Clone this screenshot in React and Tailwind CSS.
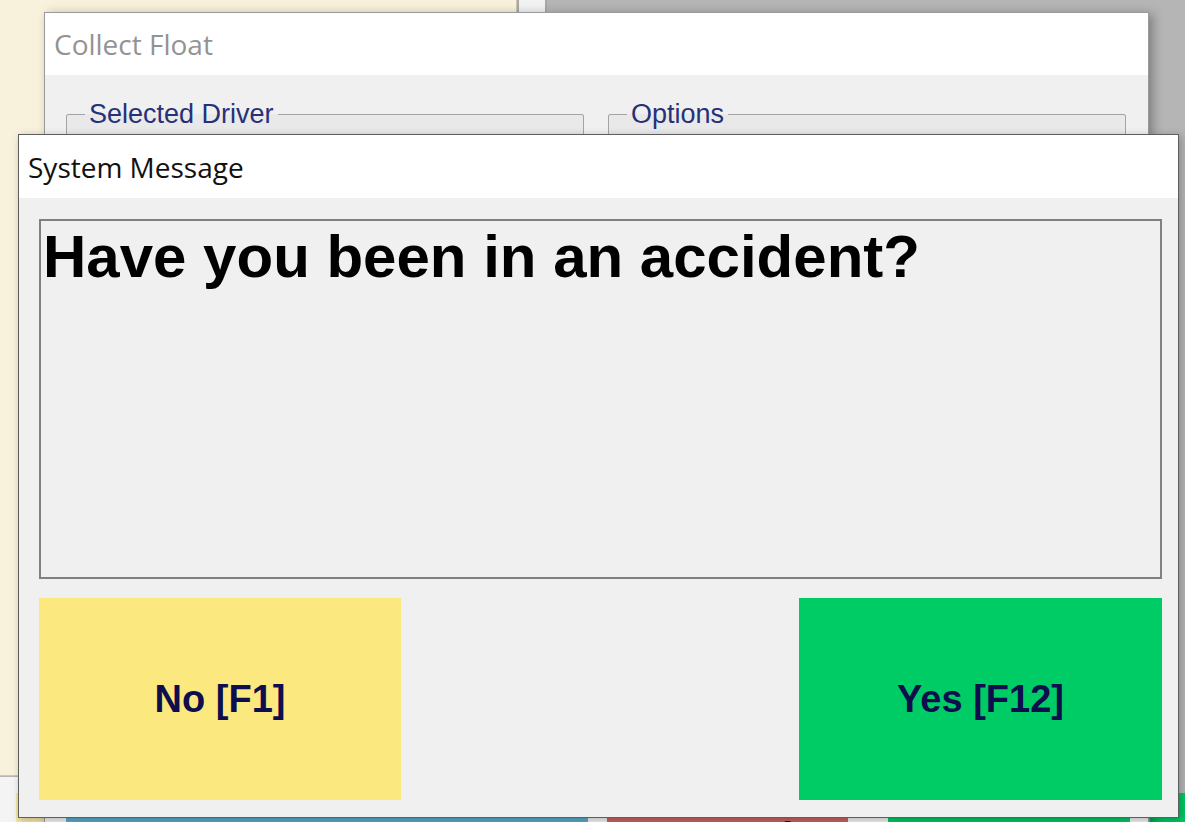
import React from "react";

const arial = { fontFamily: '"Liberation Sans", Arial, sans-serif' };
const ui = { fontFamily: '"Open Sans", "Noto Sans", sans-serif' };

function GroupBox({ label, className }) {
    return (
        <fieldset className={`border border-[#a4a4a4] rounded-[2px] bg-[#e9e9e9] ${className}`}>
            <legend className="ml-[18px] px-[4px] text-[27px] leading-none text-[#28307a]" style={arial}>
                {label}
            </legend>
        </fieldset>
    );
}

function CollectFloat() {
    return (
        <div className="absolute left-[44px] top-[12px] w-[1105px] h-[880px] flex flex-col border border-[#9a9a9a] bg-[#f0f0f0] shadow-[4px_2px_10px_rgba(0,0,0,0.3)]">
            <div className="h-[62px] bg-white flex items-center pl-[9px]">
                <span className="text-[28px] text-[#939393]" style={ui}>Collect Float</span>
            </div>
            <div className="flex flex-col pt-[26px]">
                {/* group boxes */}
                <div className="flex gap-[24px] px-[21px] h-[704px]">
                    <GroupBox label="Selected Driver" className="w-[518px]" />
                    <GroupBox label="Options" className="w-[518px]" />
                </div>
                {/* bottom buttons, mostly hidden behind the dialog */}
                <div className="flex mt-[13px] pl-[21px] h-[70px]">
                    <div className="w-[522px] bg-[#5aa8c6]" />
                    <div className="ml-[19px] w-[241px] bg-[#c8615b] flex justify-center">
                        <span className="text-[40px] font-bold leading-none text-[#1a1030] mt-[-1px]" style={arial}>Cancel</span>
                    </div>
                    <div className="ml-[40px] w-[242px] bg-[#00c862]" />
                </div>
            </div>
        </div>
    );
}

function SystemMessage() {
    return (
        <div className="absolute left-[18px] top-[134px] w-[1161px] h-[684px] flex flex-col border border-[#5e5e5e] bg-[#f0f0f0] shadow-[2px_2px_8px_rgba(0,0,0,0.25)]">
            <div className="h-[63px] bg-white flex items-center pl-[9px]">
                <span className="text-[28px] text-[#111]" style={ui}>System Message</span>
            </div>
            <div className="flex-1 flex flex-col pl-[20px] pr-[16px] pt-[21px] pb-[17px]">
                <div className="h-[360px] border-2 border-[#808080] pl-[2px] pt-[6px]">
                    <p className="text-[60px] font-bold leading-none text-black" style={arial}>
                        Have you been in an accident?
                    </p>
                </div>
                <div className="flex justify-between mt-[19px] h-[202px]">
                    <button className="w-[362px] bg-[#fbe87f] flex items-center justify-center text-[38px] font-bold text-[#0e0e4e]" style={arial}>
                        No [F1]
                    </button>
                    <button className="w-[363px] bg-[#00cc66] flex items-center justify-center text-[38px] font-bold text-[#0e0e4e]" style={arial}>
                        Yes [F12]
                    </button>
                </div>
            </div>
        </div>
    );
}

export default function App() {
    return (
        <div className="relative w-[1185px] h-[822px] overflow-hidden bg-[#b5b5b5]">
            {/* desktop behind */}
            <div className="absolute left-0 top-0 w-[517px] h-[776px] bg-[#f8f2dc] border-b border-r border-[#cfc8b0]" />
            <div className="absolute left-[517px] top-0 w-[30px] h-[12px] bg-[#f2f2f2] border-x-2 border-[#a8a8a8]" />
            <div className="absolute left-0 top-[777px] w-[44px] h-[50px] bg-[#f4f4f4]" />
            <div className="absolute left-[16px] top-[793px] w-[30px] h-[40px] bg-[#f1e6a6]" />
            <div className="absolute left-[1150px] top-[793px] w-[40px] h-[40px] bg-[#00c862]" />

            <CollectFloat />
            <SystemMessage />
        </div>
    );
}
